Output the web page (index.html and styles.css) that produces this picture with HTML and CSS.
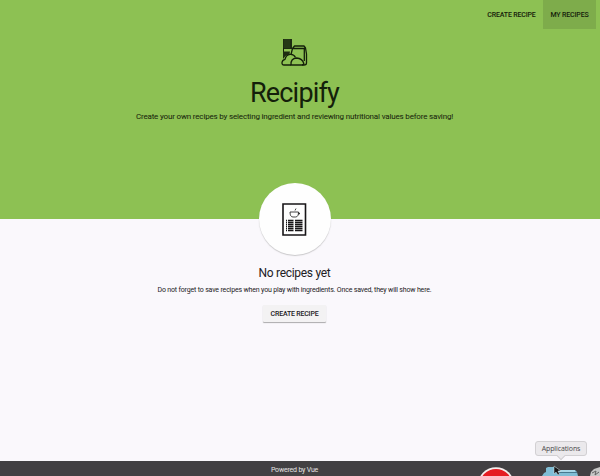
FILE: index.html
```html
<!DOCTYPE html>
<html lang="en">
<head>
<meta charset="utf-8">
<title>Recipify</title>
<link rel="stylesheet" href="styles.css">
</head>
<body>
<header class="hero">
  <nav class="nav">
    <a class="tab">CREATE RECIPE</a>
    <a class="tab active">MY RECIPES</a>
  </nav>
  <div class="brand">
    <svg class="logo" width="28" height="30" viewBox="0 0 28 30" fill="none" stroke="#14200a" stroke-width="1.3" stroke-linejoin="round">
      <path d="M2 1H11V11H2z" fill="#1d2c11" stroke="none"/>
      <path d="M4 1V10M6 1V10M8 1V10" stroke="#42602b" stroke-width=".5"/>
      <path d="M2.5 10V20" stroke-width="1"/>
      <path d="M2 13.500H9L8.500 16L4.500 18L2 21z" fill="#1d2c11" stroke="none"/>
      <path d="M11.500 10.500L13.500 8H23L24.500 10L25.500 16V25Q25.500 27 23 27H21M11.500 10.500H24.500M11.500 10.500L10 16.500M23.300 10.500V23"/>
      <path d="M10 27H3Q.8 27 1 24.500Q1.300 22 4 21.300Q5 17 9 16.400Q13 16 14.500 19.500"/>
      <path d="M10 27Q9.500 20.500 15.500 20Q21.500 20.300 22.800 25.500Q22.500 27 21 27z"/>
    </svg>
    <h1 class="title">Recipify</h1>
    <p class="tagline">Create your own recipes by selecting ingredient and reviewing nutritional values before saving!</p>
  </div>
</header>
<main class="empty">
  <div class="circle">
    <svg width="25" height="33" viewBox="0 0 25 33" fill="none" stroke="#171517">
      <path d="M1 1H23.5V32H1z" stroke-width="1.6"/>
      <path d="M8 9H16.5Q16.5 14 13.5 14H11Q8 14 8 9zM13 7.5L14 5.5M16.5 10H17.5V11H16" stroke-width=".8"/>
      <path d="M4 17.5H5M4 19.5H5M4 21.5H5M4 23.5H5M4 25.5H5M4 27.5H5M6 17.5H11.5M6 19.5H11.5M6 21.5H11.5M6 23.5H11.5M6 25.5H11.5M6 27.5H11.5M13 17.5H20.5M13 19.5H20.5M13 21.5H20.5M13 23.5H20.5M13 25.5H20.5M13 27.5H20.5" stroke-width="1.3"/>
    </svg>
  </div>
  <h2 class="heading">No recipes yet</h2>
  <p class="hint">Do not forget to save recipes when you play with ingredients. Once saved, they will show here.</p>
  <button class="create">CREATE RECIPE</button>
</main>
<footer class="footer">Powered by Vue</footer>
<div class="tooltip">Applications</div>
<svg class="dock" width="140" height="12" viewBox="0 0 140 12">
  <circle cx="36" cy="21.500" r="18.3" fill="#f4eeee"/>
  <circle cx="36" cy="21.500" r="16.5" fill="#e51c23"/>
  <path d="M82 12L84 9L86 8V4L88 3H94L97 6H115L117 8L118 12z" fill="#80bdd5"/>
  <path d="M94 3H96L97 6H115V8H97z" fill="#a8d7e7"/>
  <path d="M95 8.500H117" stroke="#47798f"/>
  <path d="M94 2V10L96 8L98 11L99.5 10L98 7H101z" fill="#171717" stroke="#d6e6ea" stroke-width=".5"/>
  <path d="M130 12L131 8L134 5L140 3V12z" fill="#c7c7c7"/>
  <path d="M132 9L136 7L135 11L139 8" fill="none" stroke="#626262"/>
</svg>
</body>
</html>
```
FILE: styles.css
```css
* { box-sizing: border-box; }
body {
  margin: 0;
  height: 476px;
  overflow: hidden;
  display: flex;
  flex-direction: column;
  font-family: Roboto, sans-serif;
  color: #222023;
  background: #faf8fc;
}
h1, h2, p { margin: 0; font-weight: 400; white-space: nowrap; }
.hero { height: 219px; flex: none; background: #8dc153; color: #14200a; }
.nav { height: 29px; display: flex; justify-content: flex-end; padding-right: 4px; }
.tab {
  display: flex;
  align-items: center;
  justify-content: center;
  width: 63px;
  font-size: 7px;
  font-weight: 500;
  letter-spacing: -.16px;
}
.tab.active { width: 53px; background: #7eac4b; }
.brand { display: flex; flex-direction: column; align-items: center; padding: 9px 11px 0 0; }
.logo { display: block; }
.title { margin-top: 8px; font-size: 27px; line-height: 34px; letter-spacing: -.8px; }
.tagline { margin-top: 1px; font-size: 8px; line-height: 12px; letter-spacing: -.17px; }
.empty { flex: 1; display: flex; flex-direction: column; align-items: center; padding-right: 11px; }
.circle {
  flex: none;
  width: 72px;
  height: 72px;
  margin-top: -36px;
  display: flex;
  align-items: center;
  justify-content: center;
  border-radius: 50%;
  background: #fefefe;
  box-shadow: 0 1px 1px #99999980;
}
.heading { margin-top: 11px; font-size: 12px; line-height: 14px; letter-spacing: -.3px; }
.hint { margin-top: 5px; font-size: 7px; line-height: 10px; letter-spacing: -.17px; }
.create {
  margin-top: 10px;
  width: 63px;
  height: 17px;
  padding: 0;
  border: 0;
  border-radius: 1px;
  background: #f3f2f3;
  box-shadow: 0 1px 1px #77777799;
  font: 500 7px Roboto, sans-serif;
  letter-spacing: -.2px;
  color: #222023;
}
.footer {
  height: 15px;
  flex: none;
  padding: 3px 11px 0 0;
  background: #424043;
  color: #e4e2e4;
  font-size: 7px;
  line-height: 12px;
  letter-spacing: -.2px;
  text-align: center;
}
.tooltip {
  position: absolute;
  left: 535px;
  top: 441px;
  width: 52px;
  height: 15px;
  border: 1px solid #d2d0d3;
  border-radius: 3px;
  background: #ebe9ec;
  color: #49474a;
  font: 7px/13px "Open Sans", sans-serif;
  letter-spacing: -.1px;
  text-align: center;
}
.tooltip::after {
  content: "";
  position: absolute;
  left: 22px;
  top: 11px;
  width: 5px;
  height: 5px;
  border: solid #d2d0d3;
  border-width: 0 1px 1px 0;
  background: #ebe9ec;
  transform: rotate(45deg);
}
.dock { position: absolute; left: 460px; top: 464px; }
```
